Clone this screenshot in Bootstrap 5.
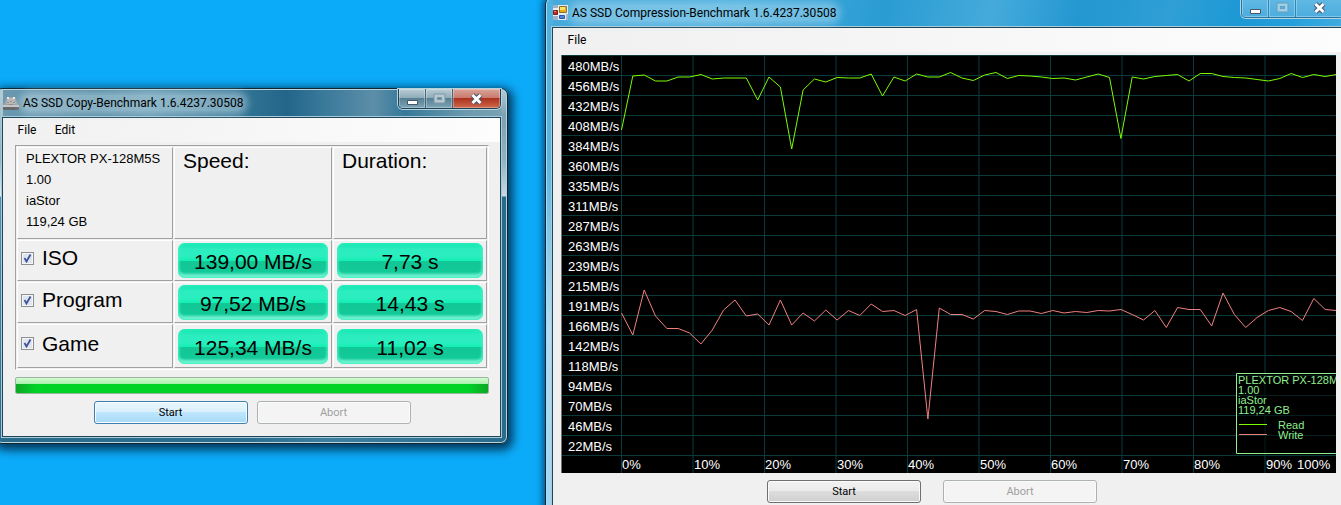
<!DOCTYPE html>
<html lang="en">

<head>
    <meta charset="UTF-8">
    <meta name="viewport" content="width=device-width, initial-scale=1.0">
    <title>AS SSD Benchmark</title>
    <link href="https://cdn.jsdelivr.net/npm/bootstrap@5.3.3/dist/css/bootstrap.min.css" rel="stylesheet">
    <style>
        body {
            background: #0cabf9;
            color: #000;
            font-family: Roboto, "Open Sans", sans-serif;
            font-size: 12px;
            line-height: 16px;
        }

        /* Windows */
        .win {
            border: 1px solid #0d2733;
            border-radius: 7px;
            padding: 0 6px 6px;
        }

        .win-copy {
            top: 88px;
            left: -5px;
            width: 513px;
            background:
                linear-gradient(#b4ccd6, #7ba2b3 26px, #8fb2c1 70px, #c6dae3 107px, #286b8b 108px, #286b8b) right 0 top 0 / 6px 100% no-repeat,
                linear-gradient(#b4ccd6, #8fb2c1 70px, #e4f0f5 107px, #4f93b3 108px, #286b8b) left 0 top 0 / 7px 100% no-repeat,
                linear-gradient(90deg, #6d9bb2, #4c85a0 20%, #5d94af 30%, #2f7192 50%, #23668a 57%, #39799a 64%, #5c8ea8 74%, #35789a 80%, #6c9aae 92%, #7ba2b3) top / 100% 30px no-repeat,
                linear-gradient(90deg, #286b8b, #2a6f8f 50%, #3c7f9f 65%, #286b8b);
            box-shadow: inset 0 0 0 1px #b8d4e0, 2px 3px 10px 3px rgba(0, 20, 40, .75);
        }

        .win-compression {
            top: -3px;
            left: 545px;
            right: -10px;
            background:
                linear-gradient(#4bb1e0, #55b5e2 160px, #b5dcf2 330px, #9fd4f2) left / 7px 100% no-repeat,
                linear-gradient(100deg, #45aadb, #4bb0df 20%, #2a9cd2 38%, #45aadb 50%, #2397d1 60%, #2f9fd6 70%, #1c98d4 78%, #25a0dc 84%, #4fb2e2 92%);
            box-shadow: inset 0 0 0 1px #a9dcf3, -1px 0 7px 1px rgba(0, 30, 70, .7);
        }

        .titlebar {
            height: 28px;
        }

        .titlebar-tall {
            height: 29px;
        }

        .win-name {
            padding-left: 1px;
        }

        .win-name span {
            border-radius: 8px;
            background: rgba(205, 226, 235, .45);
            box-shadow: 0 0 7px 4px rgba(205, 226, 235, .45);
        }

        .win-compression .win-name span {
            background: rgba(190, 226, 243, .4);
            box-shadow: 0 0 7px 4px rgba(190, 226, 243, .4);
        }

        .client {
            background: #f0f0f0;
            border: 1px solid #1e4558;
            box-shadow: 0 0 0 1px #a8cbd9;
        }

        .menu-strip {
            height: 24px;
            padding-left: 5px;
            background: linear-gradient(90deg, #f0f0f0, #fdfdfd);
        }

        .menu-strip button {
            width: 38px;
            border: 0;
            padding: 0;
            background: none;
        }

        /* Minimize, maximize, close */
        .caption {
            height: 20px;
            border: 1px solid #1c4254;
            border-top: 0;
            border-radius: 0 0 5px 5px;
            box-shadow: 0 0 0 1px #b5d3df;
            overflow: hidden;
        }

        .caption button {
            width: 27px;
            border: 0;
            border-right: 1px solid #44687a;
            padding: 0;
            line-height: 10px;
            box-shadow: inset 0 0 0 1px rgba(255, 255, 255, .3);
            background: linear-gradient(#b9ccd5, #8eabb8 48%, #567f93 50%, #7da6b7);
        }

        .caption .close-box {
            width: 47px;
            border-right: 0;
            background: linear-gradient(#d9a49b, #c8796b 48%, #ac3220 50%, #cf6a4d);
        }

        .caption-glass {
            border-color: #2775a3;
        }

        .caption-glass button,
        .caption-glass .close-box {
            border-color: #2e84b4;
            background: linear-gradient(#62b9e4, #4cadde);
        }

        /* Result table */
        .copy-body {
            padding: 3px 11px 12px 12px;
        }

        .results {
            width: 100%;
            table-layout: fixed;
            border-collapse: separate;
            border-spacing: 1px;
            border: 1px solid #a0a0a0;
            border-right-color: #fff;
            border-bottom-color: #fff;
            font: 21px/26px "Liberation Sans", Arial, sans-serif;
        }

        .results th,
        .results td {
            border: 1px solid #a0a0a0;
            border-top-color: #fff;
            border-left-color: #fff;
            padding: 0 3px;
            font-weight: 400;
        }

        .results thead th {
            height: 92px;
            padding: 0 8px;
            vertical-align: top;
        }

        .results tbody th {
            height: 41px;
            padding-bottom: 5px;
        }

        .results tbody tr:last-child th {
            height: 44px;
        }

        .drive-info {
            font-size: 13px;
            line-height: 21px;
        }

        .col-drive {
            width: 156px;
        }

        .col-speed {
            width: 158px;
        }

        .result {
            height: 35px;
            padding-top: 2px;
            line-height: 34px;
            border-radius: 7px;
            text-align: center;
            background: linear-gradient(#12e5b0, #2cecc0 18%, #2beebf 38%, #12efb3 51%, #12c795 53%, #12c998 82%, #5ff0cb);
            box-shadow: inset 0 0 3px 1px #2ef0bf, inset 0 -3px 3px #8ff5da;
        }

        .tick {
            appearance: none;
            width: 13px;
            height: 13px;
            border: 1px solid #8e8f8f;
            background: #dfe5ee url("data:image/svg+xml,%3Csvg xmlns='http://www.w3.org/2000/svg' viewBox='0 0 11 11'%3E%3Cpath d='M.5.5h10v10H.5z' fill='none' stroke='%23f6f6f6'/%3E%3Cpath d='M2.5 5l2 3.500L8.500 1.500' fill='none' stroke='%233f539b' stroke-width='1.8'/%3E%3C/svg%3E");
        }

        .done {
            height: 17px;
            margin-top: 7px;
            border: 1px solid #9ab59c;
            border-radius: 2px;
            background: none;
        }

        .done .progress-bar {
            background:
                linear-gradient(#d5fbd5, #a9f0ac 38%, transparent 40%),
                linear-gradient(90deg, #0da725, #00d328 20px, #00d328 calc(100% - 20px), #0da725);
        }

        .push {
            width: 154px;
            height: 23px;
            border: 1px solid #707070;
            border-radius: 3px;
            padding: 0;
            font-size: 11px;
            box-shadow: inset 0 0 0 1px #fbfbfb;
            background: linear-gradient(#f2f2f2, #ebebeb 48%, #dddddd 50%, #cfcfcf);
        }

        .push-hot {
            border-color: #3c7fb1;
            background: linear-gradient(#eaf6fd, #d9f0fc 48%, #bee6fd 50%, #a7d9f5);
        }

        .push:disabled {
            border-color: #adb2b5;
            color: #a0a0a0;
            background: #f4f4f4;
        }

        .copy-buttons {
            gap: 9px;
            padding-top: 7px;
        }

        /* Chart */
        .chart-body {
            padding: 3px 7px 12px 8px;
        }

        .chart-body svg {
            width: 100%;
            height: auto;
            background: #000;
            font: 13px "Liberation Sans", Arial, sans-serif;
        }

        .legend-text {
            font-size: 11px;
            fill: #90ee90;
        }

        .chart-buttons {
            gap: 22px;
            padding: 7px 0 0 206px;
        }
    </style>
</head>

<body class="vh-100 overflow-hidden position-relative">

    <!-- Compression benchmark -->
    <section class="win win-compression position-absolute">
        <div class="titlebar titlebar-tall d-flex">
            <div class="win-name d-flex gap-1 flex-grow-1 align-items-center">
                <svg width="15" height="15" viewBox="0 0 15 15">
                    <path fill="#e7edf3" d="M0 0h15v15H0z" />
                    <path fill="#9eb3c4" d="M0 0h5v3H0zM0 11h5v4H0zM13 9h2v6h-2z" />
                    <path fill="#e9a912" stroke="#8b6d24" d="M6.5 1.500h7v6h-7z" />
                    <path fill="#ffe36b" d="M7 2h5v3H7z" />
                    <path fill="#c5281c" stroke="#7e1e18" d="M.5 5.500h4v4h-4z" />
                    <path fill="#ef8d7c" d="M1 6h2v1H1z" />
                    <path fill="#4d84dc" stroke="#2855a4" d="M6.500 10.500h5v3h-5z" />
                </svg>
                <span>AS SSD Compression-Benchmark 1.6.4237.30508</span>
            </div>
            <div class="caption caption-glass d-flex">
                <button type="button" aria-label="Minimize"><svg width="13" height="12" viewBox="0 0 13 12"><path fill="#fff" stroke="#485668" d="M1.500 7.500h10v4h-10z" /></svg></button>
                <button type="button" aria-label="Maximize" disabled><svg width="13" height="12" viewBox="0 0 13 12"><path fill="none" stroke="#9fcfe6" stroke-width="3" d="M2.500 2.500h8v6h-8z" /><path fill="none" stroke="#659fbd" d="M1 1h11v9H1zM4.500 4.500h4v2h-4z" /></svg></button>
                <button type="button" class="close-box" aria-label="Close"><svg width="13" height="12" viewBox="0 0 13 12"><path stroke="#46536a" stroke-width="5" d="M2.500 2l8 8M10.500 2l-8 8" /><path stroke="#fff" stroke-width="3" d="M2.500 2l8 8M10.500 2l-8 8" /></svg></button>
            </div>
        </div>
        <div class="client">
            <nav class="menu-strip d-flex">
                <button type="button">File</button>
            </nav>
            <div class="chart-body">
                <svg class="d-block" viewBox="0 0 775 418" role="img" aria-label="Read and write speed by compression">
                    <g id="grid" fill="none" stroke="#0a3a3a"></g>
                    <path stroke="#707070" d="M.5 0v418" />
                    <g id="speedLabels" fill="#fff"></g>
                    <g fill="#fff">
                        <text x="61" y="414">0%</text>
                        <text x="133" y="414">10%</text>
                        <text x="204" y="414">20%</text>
                        <text x="276" y="414">30%</text>
                        <text x="347" y="414">40%</text>
                        <text x="419" y="414">50%</text>
                        <text x="490" y="414">60%</text>
                        <text x="562" y="414">70%</text>
                        <text x="633" y="414">80%</text>
                        <text x="705" y="414">90%</text>
                        <text x="736" y="414">100%</text>
                    </g>
                    <polyline id="readLine" fill="none" stroke="#7cfc00" />
                    <polyline id="writeLine" fill="none" stroke="#f08080" />
                    <path fill="#000" fill-opacity=".5" stroke="#90ee90" d="M780 318.500H675.500v80H780" />
                    <g class="legend-text">
                        <text x="677" y="329">PLEXTOR PX-128M5S</text>
                        <text x="677" y="339">1.00</text>
                        <text x="677" y="349">iaStor</text>
                        <text x="677" y="359">119,24 GB</text>
                        <text x="717" y="374">Read</text>
                        <text x="717" y="384">Write</text>
                    </g>
                    <path stroke="#7cfc00" d="M678 369.500h28" />
                    <path stroke="#f08080" d="M678 379.500h28" />
                </svg>
                <div class="chart-buttons d-flex">
                    <button type="button" class="push">Start</button>
                    <button type="button" class="push" disabled>Abort</button>
                </div>
            </div>
        </div>
    </section>

    <!-- Copy benchmark -->
    <section class="win win-copy position-absolute">
        <div class="titlebar d-flex">
            <div class="win-name d-flex gap-1 flex-grow-1 align-items-center">
                <svg width="16" height="15" viewBox="0 0 16 15">
                    <path fill="#a2a2a2" d="M4 1h8l4 9H0z" />
                    <path fill="#b9b9b9" d="M5 2h6l2 6H3z" />
                    <path fill="#e9e9e9" d="M4 1h2v2H4zM10 1h2v2h-2z" />
                    <path stroke="#8f8f8f" d="M4 6.500h2M7 5.500h2M10 6.500h2M6 8.500h4" />
                    <path fill="#66686b" d="M0 10h16v3q0 1-1 1H1q-1 0-1-1z" />
                    <path fill="#c6c6c6" d="M0 9h16v2H0z" />
                </svg>
                <span>AS SSD Copy-Benchmark 1.6.4237.30508</span>
            </div>
            <div class="caption d-flex">
                <button type="button" aria-label="Minimize"><svg width="13" height="12" viewBox="0 0 13 12"><path fill="#fff" stroke="#485668" d="M1.500 7.500h10v4h-10z" /></svg></button>
                <button type="button" aria-label="Maximize" disabled><svg width="13" height="12" viewBox="0 0 13 12"><path fill="none" stroke="#b5c8d1" stroke-width="3" d="M2.500 2.500h8v6h-8z" /><path fill="none" stroke="#7d98a6" d="M1 1h11v9H1zM4.500 4.500h4v2h-4z" /></svg></button>
                <button type="button" class="close-box" aria-label="Close"><svg width="13" height="12" viewBox="0 0 13 12"><path stroke="#46536a" stroke-width="5" d="M2.500 2l8 8M10.500 2l-8 8" /><path stroke="#fff" stroke-width="3" d="M2.500 2l8 8M10.500 2l-8 8" /></svg></button>
            </div>
        </div>
        <div class="client">
            <nav class="menu-strip d-flex">
                <button type="button">File</button>
                <button type="button">Edit</button>
            </nav>
            <div class="copy-body">
                <table class="results">
                    <colgroup>
                        <col class="col-drive">
                        <col class="col-speed">
                        <col>
                    </colgroup>
                    <thead>
                        <tr>
                            <th>
                                <div class="drive-info">PLEXTOR PX-128M5S<br>1.00<br>iaStor<br>119,24 GB</div>
                            </th>
                            <th>Speed:</th>
                            <th>Duration:</th>
                        </tr>
                    </thead>
                    <tbody>
                        <tr>
                            <th>
                                <div class="d-flex align-items-center gap-2"><input class="tick" type="checkbox" id="iso" checked><label for="iso">ISO</label></div>
                            </th>
                            <td><div class="result">139,00 MB/s</div></td>
                            <td><div class="result">7,73 s</div></td>
                        </tr>
                        <tr>
                            <th>
                                <div class="d-flex align-items-center gap-2"><input class="tick" type="checkbox" id="program" checked><label for="program">Program</label></div>
                            </th>
                            <td><div class="result">97,52 MB/s</div></td>
                            <td><div class="result">14,43 s</div></td>
                        </tr>
                        <tr>
                            <th>
                                <div class="d-flex align-items-center gap-2"><input class="tick" type="checkbox" id="game" checked><label for="game">Game</label></div>
                            </th>
                            <td><div class="result">125,34 MB/s</div></td>
                            <td><div class="result">11,02 s</div></td>
                        </tr>
                    </tbody>
                </table>
                <div class="progress done" role="progressbar" aria-label="Progress" aria-valuenow="100" aria-valuemin="0" aria-valuemax="100">
                    <div class="progress-bar w-100"></div>
                </div>
                <div class="copy-buttons d-flex justify-content-center">
                    <button type="button" class="push push-hot">Start</button>
                    <button type="button" class="push" disabled>Abort</button>
                </div>
            </div>
        </div>
    </section>

    <script>
        // Heights of the 64 samples of each curve, in chart units
        const read = [75, 21, 20, 26, 26, 22, 22, 19.5, 24, 23, 23, 23, 45, 22, 32, 94, 35, 24, 27, 22.5, 23, 23, 19, 41, 22, 26, 19, 22, 22, 17.5, 23, 25.5, 20, 17.5, 23.5, 20.5, 21, 22, 23.5, 23, 25, 22, 19, 22.5, 83.5, 22, 24, 21.5, 20.5, 19.5, 26, 18.5, 18.5, 21.5, 22.5, 23, 24.5, 26, 23.5, 18.5, 22.5, 19.5, 21.5, 19.5];
        const write = [258, 280, 235, 261, 273.5, 273.5, 278, 289, 275, 255, 245, 261, 259, 270, 245, 270, 258, 266, 255, 265, 255.5, 260.5, 249, 256.5, 255.5, 260.5, 254.5, 364, 253, 259.5, 259.5, 264, 255.5, 256.5, 259.5, 256, 256, 258.5, 255.5, 258, 256.5, 257.5, 255.5, 256, 254.5, 259.5, 265, 255.5, 272.5, 252.5, 254.5, 254.5, 271, 238, 259.5, 272.5, 262.5, 255.5, 252.5, 256.5, 265.5, 243.5, 254.5, 255.5];
        const speeds = [480, 456, 432, 408, 384, 360, 335, 311, 287, 263, 239, 215, 191, 166, 142, 118, 94, 70, 46, 22];

        function toPoints(values) {
            return values.map((y, i) => (60.5 + i * 715 / 63).toFixed(1) + ',' + y).join(' ');
        }

        document.getElementById('readLine').setAttribute('points', toPoints(read));
        document.getElementById('writeLine').setAttribute('points', toPoints(write));

        let lines = '';
        for (let i = 0; i <= 20; i++) lines += `M0 ${i * 20 + 0.5}H775`;
        for (let i = 0; i <= 10; i++) lines += `M${60.5 + i * 71.5} 0V418`;
        document.getElementById('grid').innerHTML = `<path d="${lines}" />`;

        document.getElementById('speedLabels').innerHTML = speeds
            .map((speed, i) => `<text x="7" y="${16 + i * 20}">${speed}MB/s</text>`)
            .join('');
    </script>

    <script src="https://cdn.jsdelivr.net/npm/bootstrap@5.3.3/dist/js/bootstrap.bundle.min.js"></script>

</body>

</html>
